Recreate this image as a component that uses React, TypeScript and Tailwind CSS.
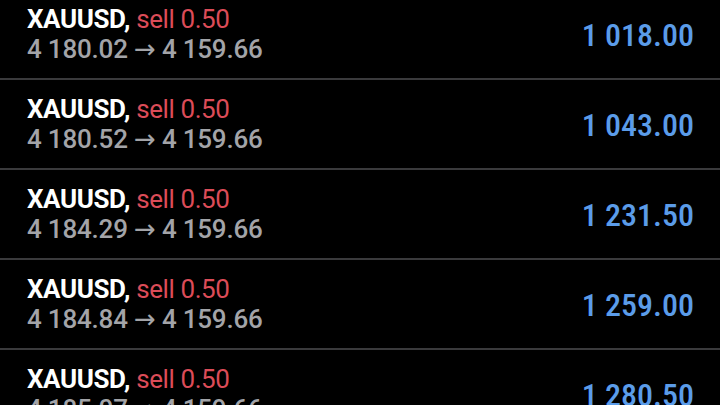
const rows = [
  { open: "4 180.02", close: "4 159.66", profit: "1 018.00" },
  { open: "4 180.52", close: "4 159.66", profit: "1 043.00" },
  { open: "4 184.29", close: "4 159.66", profit: "1 231.50" },
  { open: "4 184.84", close: "4 159.66", profit: "1 259.00" },
  { open: "4 185.07", close: "4 159.66", profit: "1 280.50" },
];

function TradeRow({ open, close, profit }: { open: string; close: string; profit: string }) {
  return (
    <div className="h-[90px] flex items-center justify-between pl-[27px] pr-[26px] border-b-2 border-[#3a3a3c]">
      <div className="flex flex-col">
        <div className="text-[26px] leading-[30px] tracking-[-0.4px]">
          <span className="font-bold text-white">XAUUSD,</span>{" "}
          <span className="text-[#dc4c58]">sell 0.50</span>
        </div>
        <div className="text-[26px] leading-[30px] font-medium text-[#a3a4a8] tracking-[-0.2px]">
          {open}{" "}
          <span style={{ fontFamily: "'DejaVu Sans', sans-serif" }} className="font-normal">→</span>{" "}
          {close}
        </div>
      </div>
      <div className="text-[32px] font-medium text-[#5b9ce9] tracking-[0px] mt-[1px] [font-stretch:87.5%]">{profit}</div>
    </div>
  );
}

export default function App() {
  return (
    <div className="w-[720px] h-[405px] overflow-hidden bg-black" style={{ fontFamily: "Roboto, 'Noto Sans', sans-serif" }}>
      <div className="-mt-[10px]">
        {rows.map((r, i) => (
          <TradeRow key={i} {...r} />
        ))}
      </div>
    </div>
  );
}
